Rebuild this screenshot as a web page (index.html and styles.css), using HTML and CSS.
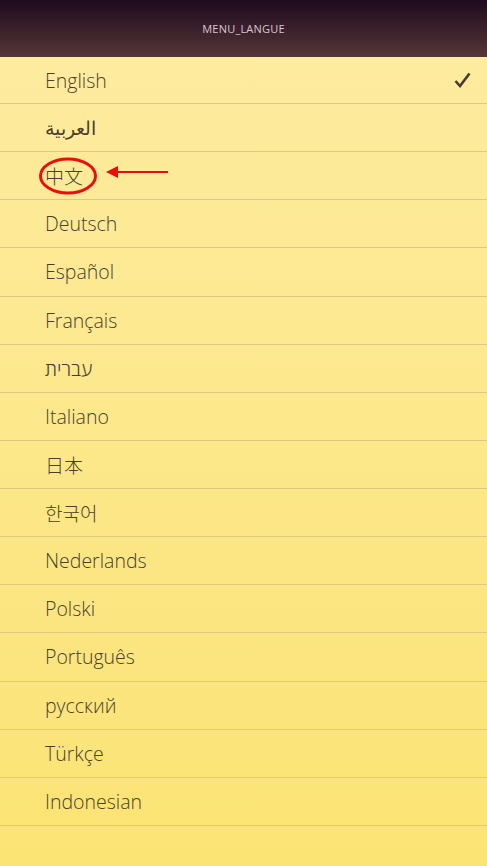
FILE: index.html
```html
<!DOCTYPE html>
<html lang="fr">
<head>
    <meta charset="UTF-8">
    <meta name="viewport" content="width=device-width, initial-scale=1.0">
    <title>MENU_LANGUE</title>
    <link rel="stylesheet" href="styles.css">
</head>
<body>
    <header class="topbar">MENU_LANGUE</header>

    <ul class="languages">
        <li class="lang selected">
            <span>English</span>
            <svg class="check" width="17" height="16" viewBox="0 0 17 16">
                <path d="M1.5 9 L6 14 L15.5 1.5" fill="none" stroke="#4a3a30" stroke-width="2.6"/>
            </svg>
        </li>
        <li class="lang"><span class="arabic">العربية</span></li>
        <li class="lang marked">
            <span class="cjk">中文</span>
            <!-- annotation drawn over the row -->
            <svg class="annotation" width="140" height="44" viewBox="0 0 140 44">
                <ellipse cx="30" cy="22" rx="27.5" ry="17" fill="none" stroke="#e80f0f" stroke-width="3"/>
                <line x1="76" y1="18" x2="130" y2="18" stroke="#e80f0f" stroke-width="2"/>
                <path d="M68 18 L80 12 L80 24 Z" fill="#e80f0f"/>
            </svg>
        </li>
        <li class="lang"><span>Deutsch</span></li>
        <li class="lang"><span>Español</span></li>
        <li class="lang"><span>Français</span></li>
        <li class="lang"><span>עברית</span></li>
        <li class="lang"><span>Italiano</span></li>
        <li class="lang"><span class="cjk">日本</span></li>
        <li class="lang"><span class="cjk">한국어</span></li>
        <li class="lang"><span>Nederlands</span></li>
        <li class="lang"><span>Polski</span></li>
        <li class="lang"><span>Português</span></li>
        <li class="lang"><span>русский</span></li>
        <li class="lang"><span>Türkçe</span></li>
        <li class="lang"><span>Indonesian</span></li>
    </ul>
</body>
</html>
```

FILE: styles.css
```css
html, body {
    height: 100%;
}
body {
    margin: 0;
    font-family: "Open Sans", "Noto Sans", "Noto Sans CJK SC", sans-serif;
    background: linear-gradient(to bottom, #feeca2 0%, #fbe373 100%);
    color: #4a3f2e;
}
.topbar {
    height: 57px;
    display: flex;
    align-items: center;
    justify-content: center;
    background: linear-gradient(to bottom, #1e0a1e 0%, #563638 100%);
    color: #d9c7d0;
    font-size: 11px;
    letter-spacing: 0.2px;
}
.languages {
    list-style: none;
    margin: 0;
    padding: 0;
}
.lang {
    position: relative;
    height: 47.13px;
    display: flex;
    align-items: center;
    justify-content: space-between;
    padding: 0 16px 0 45px;
    border-bottom: 1px solid #dcc789;
    font-size: 19.5px;
    font-weight: 300;
}
.lang:first-child {
    height: 46px;
}
.cjk {
    font-family: "Noto Sans CJK KR", sans-serif;
    font-size: 19px;
}
.arabic {
    font-family: "DejaVu Sans ExtraLight", "DejaVu Sans", sans-serif;
    font-size: 19px;
    font-weight: 200;
}
.check {
    display: block;
}
.annotation {
    position: absolute;
    left: 38px;
    top: 2px;
}
```
